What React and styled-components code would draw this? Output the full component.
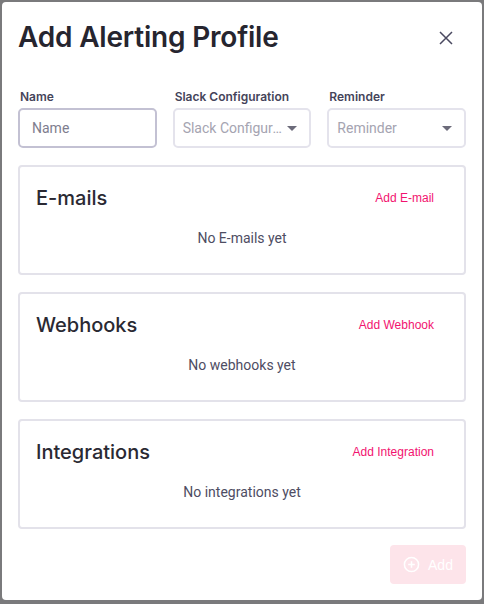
import React from 'react';
import styled, { createGlobalStyle } from 'styled-components';

const GlobalStyle = createGlobalStyle`
  html, body {
    margin: 0;
    padding: 0;
    background: #7a7a7c;
    font-family: Roboto, "Liberation Sans", sans-serif;
  }
`;

const Backdrop = styled.div`
  width: 484px;
  height: 604px;
  padding: 2px;
  box-sizing: border-box;
`;

const Modal = styled.div`
  width: 480px;
  height: 598px;
  background: #ffffff;
  border-radius: 4px;
  padding: 16px;
  box-sizing: border-box;
  display: flex;
  flex-direction: column;
`;

const Header = styled.div`
  display: flex;
  align-items: center;
  justify-content: space-between;
  height: 40px;
`;

const Title = styled.h1`
  margin: 0;
  font-family: Inter, "Noto Sans", sans-serif;
  font-size: 28px;
  font-weight: 600;
  color: #26252f;
  letter-spacing: -0.2px;
`;

const CloseButton = styled.button`
  border: none;
  background: none;
  padding: 0;
  width: 24px;
  height: 24px;
  display: flex;
  align-items: center;
  justify-content: center;
  margin-right: 8px;
  margin-top: 2px;
  cursor: pointer;
`;

const FieldRow = styled.div`
  display: grid;
  grid-template-columns: repeat(3, minmax(0, 1fr));
  gap: 16px;
  margin-top: 33px;
`;

const Field = styled.div`
  display: flex;
  flex-direction: column;
  gap: 4px;
`;

const Label = styled.label`
  font-family: Inter, "Noto Sans", sans-serif;
  font-size: 12px;
  font-weight: 600;
  color: #45445a;
  padding-left: 2px;
  line-height: 15px;
`;

const Input = styled.input`
  height: 40px;
  box-sizing: border-box;
  border: 2px solid ${(p) => (p.$active ? '#c3c1d3' : '#e4e3ec')};
  border-radius: 5px;
  padding: 0 12px;
  font-family: Roboto, sans-serif;
  font-size: 14px;
  outline: none;
  width: 100%;
  &::placeholder {
    color: #7e7d8e;
  }
`;

const Select = styled.div`
  height: 40px;
  box-sizing: border-box;
  border: 2px solid #e4e3ec;
  border-radius: 5px;
  padding: 0 12px 0 8px;
  display: flex;
  align-items: center;
  gap: 4px;
`;

const SelectText = styled.span`
  flex: 1;
  min-width: 0;
  font-size: 14px;
  color: #a5a4b1;
  white-space: nowrap;
  overflow: hidden;
  text-overflow: ellipsis;
`;

const Arrow = styled.span`
  width: 0;
  height: 0;
  border-left: 5px solid transparent;
  border-right: 5px solid transparent;
  border-top: 5px solid #6c6b7a;
  flex-shrink: 0;
`;

const Sections = styled.div`
  display: flex;
  flex-direction: column;
  gap: 17px;
  margin-top: 17px;
`;

const Card = styled.section`
  height: 110px;
  box-sizing: border-box;
  border: 2px solid #e3e2ea;
  border-radius: 4px;
  padding: 18px 30px 0 16px;
`;

const CardHead = styled.div`
  display: flex;
  align-items: center;
  justify-content: space-between;
  height: 26px;
`;

const CardTitle = styled.h2`
  margin: 0;
  font-family: Inter, "Noto Sans", sans-serif;
  font-size: 20px;
  font-weight: 500;
  color: #2a2933;
`;

const LinkButton = styled.button`
  border: none;
  background: none;
  padding: 0;
  font-family: "Liberation Sans", Arial, sans-serif;
  font-size: 12px;
  color: #f2136f;
  cursor: pointer;
`;

const Empty = styled.p`
  margin: 19px 0 0;
  text-align: center;
  font-size: 14px;
  color: #4e4d63;
  padding-left: 14px;
`;

const Footer = styled.div`
  display: flex;
  justify-content: flex-end;
  margin-top: 16px;
`;

const AddButton = styled.button`
  height: 39px;
  width: 76px;
  border: none;
  border-radius: 4px;
  background: #fde4ea;
  color: #ffffff;
  font-family: "Liberation Sans", Arial, sans-serif;
  font-size: 14px;
  display: flex;
  align-items: center;
  justify-content: center;
  gap: 8px;
  padding: 0;
`;

const sections = [
  { title: 'E-mails', action: 'Add E-mail', empty: 'No E-mails yet' },
  { title: 'Webhooks', action: 'Add Webhook', empty: 'No webhooks yet' },
  { title: 'Integrations', action: 'Add Integration', empty: 'No integrations yet' },
];

const App = () => {
  return (
    <>
      <GlobalStyle />
      <Backdrop>
        <Modal>
          <Header>
            <Title>Add Alerting Profile</Title>
            <CloseButton aria-label="Close">
              <svg width="14" height="14" viewBox="0 0 14 14">
                <path d="M1 1L13 13M13 1L1 13" stroke="#4a4960" strokeWidth="1.5" />
              </svg>
            </CloseButton>
          </Header>

          <FieldRow>
            <Field>
              <Label>Name</Label>
              <Input $active placeholder="Name" />
            </Field>
            <Field>
              <Label>Slack Configuration</Label>
              <Select>
                <SelectText>Slack Configuration</SelectText>
                <Arrow />
              </Select>
            </Field>
            <Field>
              <Label>Reminder</Label>
              <Select>
                <SelectText>Reminder</SelectText>
                <Arrow />
              </Select>
            </Field>
          </FieldRow>

          <Sections>
            {sections.map((s) => (
              <Card key={s.title}>
                <CardHead>
                  <CardTitle>{s.title}</CardTitle>
                  <LinkButton>{s.action}</LinkButton>
                </CardHead>
                <Empty>{s.empty}</Empty>
              </Card>
            ))}
          </Sections>

          <Footer>
            <AddButton disabled>
              <svg width="17" height="17" viewBox="0 0 18 18">
                <circle cx="9" cy="9" r="7.5" fill="none" stroke="#fff" strokeWidth="1.6" />
                <path d="M9 5.5V12.5M5.5 9H12.5" stroke="#fff" strokeWidth="1.6" />
              </svg>
              Add
            </AddButton>
          </Footer>
        </Modal>
      </Backdrop>
    </>
  );
};

export default App;
